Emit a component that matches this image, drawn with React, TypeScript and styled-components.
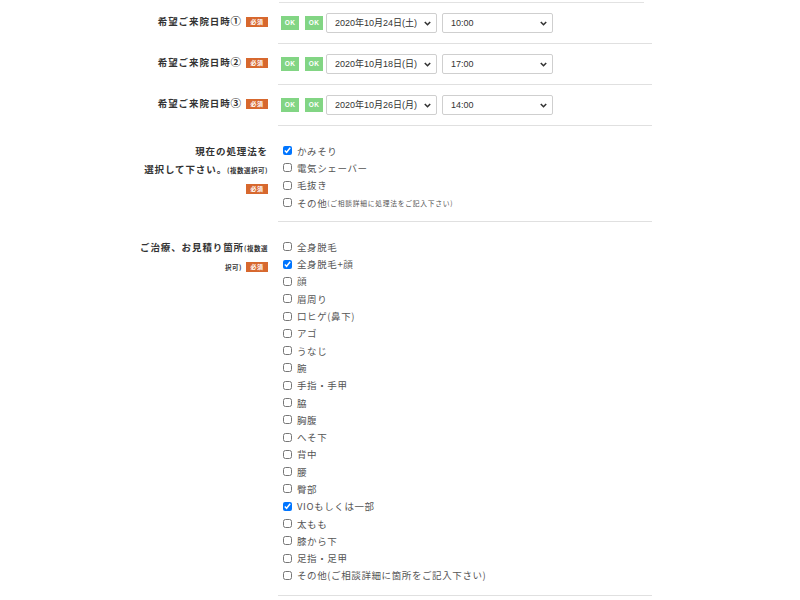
import React from "react";
import styled, { createGlobalStyle } from "styled-components";

const Global = createGlobalStyle`
  html, body { margin: 0; padding: 0; background: #fff; }
  body { font-family: "Noto Sans CJK JP", "Noto Sans", sans-serif; color: #333; }
`;

const Page = styled.div`
  width: 800px;
  height: 600px;
  overflow: hidden;
  padding-top: 2px;
  box-sizing: border-box;
`;

const TopRule = styled.div`
  margin-left: 279px;
  width: 365px;
  height: 1px;
  background: #e2e2e2;
`;

const Row = styled.div`
  display: grid;
  grid-template-columns: 168px 374px;
  column-gap: 10px;
  margin-left: 100px;
`;

const Label = styled.div<{ $top: number }>`
  padding-top: ${(p) => p.$top}px;
  text-align: right;
  font-size: 9.5px;
  font-weight: 700;
  letter-spacing: 0.9px;
  line-height: 18px;
  color: #333;
  white-space: nowrap;
`;

const Circled = styled.span`
  font-size: 10.5px;
  line-height: 1;
`;

const Small = styled.span`
  font-size: 6.5px;
  letter-spacing: 0.5px;
`;

const Badge = styled.span`
  display: inline-flex;
  align-items: center;
  justify-content: center;
  width: 22px;
  height: 10px;
  margin-left: 4px;
  background: #d7682e;
  color: #fff;
  font-size: 6px;
  font-weight: 700;
  letter-spacing: 0.5px;
  vertical-align: 1px;
  line-height: 1;
`;

const Content = styled.div<{ $pt: number; $pb: number }>`
  border-bottom: 1px solid #e0e0e0;
  padding: ${(p) => p.$pt}px 0 ${(p) => p.$pb}px;
`;

const DateLine = styled.div`
  display: flex;
  align-items: center;
  height: 21px;
  padding-left: 3px;
`;

const Ok = styled.span<{ $gap: number }>`
  display: inline-flex;
  align-items: center;
  justify-content: center;
  width: 18px;
  height: 14px;
  margin-right: ${(p) => p.$gap}px;
  background: #82d584;
  color: #fff;
  font-family: "Liberation Sans", sans-serif;
  font-size: 6.5px;
  font-weight: 700;
  letter-spacing: 0.3px;
`;

const SelectWrap = styled.div`
  position: relative;
  flex: none;
  width: 111px;
  height: 20px;
  margin-right: 5px;
`;

const Select = styled.select`
  appearance: none;
  display: block;
  box-sizing: border-box;
  width: 100%;
  height: 20px;
  margin: 0;
  border: 1px solid #cfcfcf;
  border-radius: 2px;
  background: #fff;
  padding: 0 0 0 8px;
  font-family: "Liberation Sans", "Noto Sans CJK JP", sans-serif;
  font-size: 9px;
  line-height: 18px;
  color: #333;
  outline: none;
`;

const Chevron = styled.svg`
  position: absolute;
  right: 6px;
  top: 8px;
  pointer-events: none;
`;

const List = styled.div`
  display: flex;
  flex-direction: column;
  padding-left: 5px;
`;

const Item = styled.label`
  display: flex;
  align-items: center;
  height: 17.3px;
  font-size: 9.5px;
  letter-spacing: 0.6px;
  color: #555;
  white-space: nowrap;
`;

const Check = styled.input`
  width: 9px;
  height: 9px;
  margin: 0 5px 0 0;
  flex: none;
`;

const Note = styled.span`
  font-size: 6.8px;
  letter-spacing: 0.7px;
`;

const dates = [
  { label: "希望ご来院日時", num: "①", date: "2020年10月24日(土)", time: "10:00" },
  { label: "希望ご来院日時", num: "②", date: "2020年10月18日(日)", time: "17:00" },
  { label: "希望ご来院日時", num: "③", date: "2020年10月26日(月)", time: "14:00" },
];

const methods: { text: string; note?: string; checked?: boolean }[] = [
  { text: "かみそり", checked: true },
  { text: "電気シェーバー" },
  { text: "毛抜き" },
  { text: "その他", note: "(ご相談詳細に処理法をご記入下さい)" },
];

const parts: { text: string; checked?: boolean }[] = [
  { text: "全身脱毛" },
  { text: "全身脱毛+顔", checked: true },
  { text: "顔" },
  { text: "眉周り" },
  { text: "口ヒゲ(鼻下)" },
  { text: "アゴ" },
  { text: "うなじ" },
  { text: "腕" },
  { text: "手指・手甲" },
  { text: "脇" },
  { text: "胸腹" },
  { text: "へそ下" },
  { text: "背中" },
  { text: "腰" },
  { text: "臀部" },
  { text: "VIOもしくは一部", checked: true },
  { text: "太もも" },
  { text: "膝から下" },
  { text: "足指・足甲" },
  { text: "その他(ご相談詳細に箇所をご記入下さい)" },
];

const ChevronIcon = () => (
  <Chevron width="7" height="5" viewBox="0 0 7 5">
    <path d="M0.8 1 L3.5 3.7 L6.2 1" fill="none" stroke="#333" strokeWidth="1.6" />
  </Chevron>
);

const DateSelect = ({ value }: { value: string }) => (
  <SelectWrap>
    <Select defaultValue={value}>
      <option>{value}</option>
    </Select>
    <ChevronIcon />
  </SelectWrap>
);

export default function App() {
  return (
    <Page>
      <Global />
      <TopRule />
      {dates.map((d) => (
        <Row key={d.num}>
          <Label $top={9}>
            {d.label}
            <Circled>{d.num}</Circled>
            <Badge>必須</Badge>
          </Label>
          <Content $pt={9} $pb={10}>
            <DateLine>
              <Ok $gap={6}>OK</Ok>
              <Ok $gap={3}>OK</Ok>
              <DateSelect value={d.date} />
              <DateSelect value={d.time} />
            </DateLine>
          </Content>
        </Row>
      ))}
      <Row>
        <Label $top={16}>
          現在の処理法を
          <br />
          選択して下さい。<Small>(複数選択可)</Small>
          <br />
          <Badge>必須</Badge>
        </Label>
        <Content $pt={16} $pb={10}>
          <List>
            {methods.map((m) => (
              <Item key={m.text}>
                <Check type="checkbox" defaultChecked={m.checked} />
                {m.text}
                {m.note && <Note>{m.note}</Note>}
              </Item>
            ))}
          </List>
        </Content>
      </Row>
      <Row>
        <Label $top={16}>
          ご治療、お見積り箇所<Small>(複数選</Small>
          <br />
          <Small>択可)</Small>
          <Badge>必須</Badge>
        </Label>
        <Content $pt={16} $pb={11}>
          <List>
            {parts.map((m) => (
              <Item key={m.text}>
                <Check type="checkbox" defaultChecked={m.checked} />
                {m.text}
              </Item>
            ))}
          </List>
        </Content>
      </Row>
    </Page>
  );
}
